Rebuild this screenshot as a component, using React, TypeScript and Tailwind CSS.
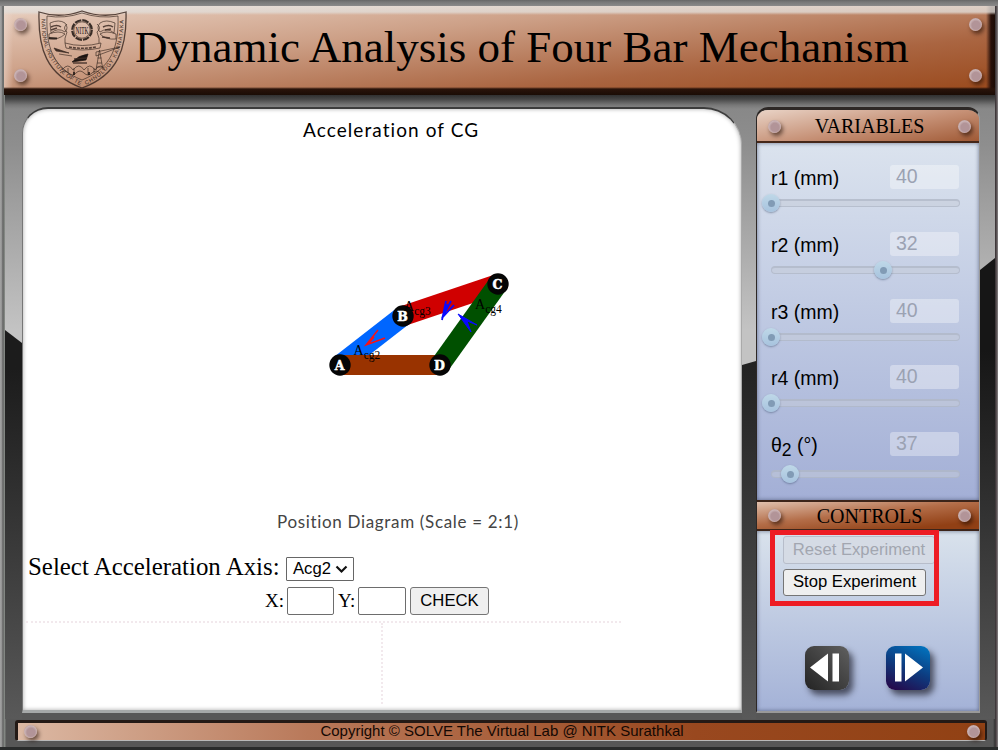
import React from "react";

const SERIF = "font-['Liberation_Serif',serif]";
const SANS = "font-['Liberation_Sans',sans-serif]";

function Rivet() {
  return (
    <span className="block h-[13px] w-[13px] shrink-0 rounded-full bg-[radial-gradient(circle_at_54%_56%,#b29498_0%,#b29498_40%,#cbb4b6_62%,#ab8d8c_85%)] shadow-[2px_3px_4px_rgba(30,10,0,0.6)]" />
  );
}

function Crest() {
  return (
    <svg width="90" height="80" viewBox="0 0 90 80" fill="none" stroke="#3d2c24" strokeWidth="0.8" strokeOpacity="0.85">
      <defs>
        <path id="crest-left" d="M3.500 8 C3 38 12 60 43 76" />
        <path id="crest-right" d="M46 76 C78 60 86 38 85.500 8" />
      </defs>
      <path d="M1 2 Q22 9 44 1 Q66 9 88 2 C89 38 80 65 44 78 C8 65 0 38 1 2Z" strokeWidth="1.3" />
      <path d="M9 6 Q26 9 44 3 Q62 9 80 6 C81 36 74 58 44 70 C14 58 8 36 9 6Z" />
      <g fill="#3d2c24" stroke="none" fontSize="5.600" fontFamily="Liberation Sans">
        <text><textPath href="#crest-left" startOffset="1" textLength="82">NATIONAL INSTITUTE OF TE</textPath></text>
        <text><textPath href="#crest-right" startOffset="2" textLength="80">CHNOLOGY KARNATAKA</textPath></text>
      </g>
      <circle cx="44" cy="20" r="9.800" stroke="#1c1411" strokeWidth="2.200" strokeDasharray="6.600 1.100" />
      <circle cx="44" cy="20" r="8.200" />
      <text x="44" y="24" textAnchor="middle" fontSize="10" textLength="13" lengthAdjust="spacingAndGlyphs" fill="#1c1411" stroke="none" fontFamily="Liberation Serif">NITK</text>
      <path d="M12 13 q9-4 15 0 q4 5 0 9 q-7-5-14 1z M11 24 q10-4 16 0 q-6 6-16 5z M77 13 q-9-4-15 0 q-4 5 0 9 q7-5 14 1z M78 24 q-10-4-16 0 q6 6 16 5z" />
      <path d="M13 17q6-3 10 0m-10 3l6-2M65 17q6-3 10 0m-8 3l6-1M64 27l8 1" strokeWidth="1.500" />
      <path d="M11 28l8 .5" stroke="#1c1411" strokeWidth="2.200" />
      <path d="M29 14 q-5 4 0 8 q-3 7-2 11 M59 14 q5 4 0 8 q3 7 2 11 M27 33 Q44 38 63 33 L62 38 Q44 42 28 38Z" />
      <path d="M31 37 Q44 39.500 58 37" strokeDasharray="3 1" strokeWidth="1.600" />
      <path d="M16 38 l15 5-13-2z M21 44l13 2" fill="#3d2c24" strokeWidth=".8" />
      <path d="M34 52 q7-7 16-8l-2 6z" fill="#1c1411" stroke="#1c1411" />
      <path d="M36 49l13-1M35 53h14" strokeWidth="1.600" />
      <path d="M58 46L82 37L58 42Z" />
      <path d="M61.500 40 L58 60 M61.500 40 L65 60 M59.500 48h4M59 53h5M58.500 57h6" />
      <path d="M24 60 q6-8 11 0 q6-8 11 0 q6-8 11 0 q6-8 10 0 M22 63 q4-4 8 0t8 0t8 0t8 0t8 0 M30 58v5M36 58v7M50 58v7M56 58v5" />
      <path d="M36 62v3M51 62v3" stroke="#1c1411" strokeWidth="1.800" />
    </svg>
  );
}

const variables = [
  { label: <>r1 (mm)</>, value: "40", at: 0, gap: "mt-[10px]", row: "h-[67px]" },
  { label: <>r2 (mm)</>, value: "32", at: 112, gap: "mt-[10px]", row: "h-[67px]" },
  { label: <>r3 (mm)</>, value: "40", at: 0, gap: "mt-[10px]", row: "h-[66px]" },
  { label: <>r4 (mm)</>, value: "40", at: 0, gap: "mt-[10px]", row: "h-[67px]" },
  { label: <>θ<sub className="text-[17.500px]">2</sub> (°)</>, value: "37", at: 19, gap: "mt-[14px]", row: "h-[68px]" },
];

function SectionTitle({ children, className }: { children: React.ReactNode; className: string }) {
  return (
    <div className={`flex items-center justify-between pl-[11px] pr-[8px] ${SERIF} text-[20px] leading-none text-black ${className}`}>
      <Rivet />
      <span>{children}</span>
      <Rivet />
    </div>
  );
}

function Diagram() {
  const nodes = [
    { n: "A", x: 340, y: 365 },
    { n: "B", x: 403, y: 316 },
    { n: "C", x: 498, y: 284 },
    { n: "D", x: 440, y: 365 },
  ];
  return (
    <svg className="block" width="718" height="356" viewBox="23 146 718 356">
      <path d="M340 365L403 316" stroke="#0066ff" strokeWidth="20" />
      <path d="M403 316L498 284" stroke="#d00000" strokeWidth="20" />
      <path d="M340 365H440" stroke="#993300" strokeWidth="20" />
      <path d="M440 365L498 284" stroke="#005000" strokeWidth="20" />
      {nodes.map((p) => (
        <g key={p.n}>
          <circle cx={p.x} cy={p.y} r="10.700" fill="#050505" />
          <text x={p.x - 0.5} y={p.y + 4.5} textAnchor="middle" fontFamily="DejaVu Serif" fontWeight="bold" fontSize="12.500" fill="#fff" stroke="#fff" strokeWidth="0.500">{p.n}</text>
        </g>
      ))}
      <path d="M378 330L366 345L385 338M369 343L374 337" fill="none" stroke="#ff1010" strokeWidth="1.400" />
      <path d="M446 301L442 320M451 301L442 318L454 305M447 304L444 316" fill="none" stroke="#0808ff" strokeWidth="1.800" />
      <path d="M458 314L477 325L467 321L471 332Z" fill="#0808ff" stroke="#0808ff" strokeWidth="1" />
      <g fontFamily="Liberation Serif" fontSize="14" fill="#000">
        <text x="353.500" y="355">A<tspan dy="4" fontSize="11.500">cg2</tspan></text>
        <text x="404" y="311">A<tspan dy="4" fontSize="11.500">cg3</tspan></text>
        <text x="475" y="309">A<tspan dy="4" fontSize="11.500">cg4</tspan></text>
      </g>
    </svg>
  );
}

function StepIcon({ dir }: { dir: "back" | "next" }) {
  return dir === "back" ? (
    <button className="h-[44px] w-[44px] rounded-[9px] bg-gradient-to-tr from-[#242424] to-[#606060] shadow-[4px_5px_6px_rgba(20,20,30,0.65)]">
      <svg width="44" height="44" viewBox="0 0 44 44" fill="#fff"><path d="M5 21.500L23 7.500V35.500ZM27.500 7.500H34V35.500H27.500Z" /></svg>
    </button>
  ) : (
    <button className="h-[44px] w-[44px] rounded-[9px] bg-[linear-gradient(25deg,#26084a_5%,#0d3c80_50%,#0078c4_100%)] shadow-[4px_5px_6px_rgba(20,20,30,0.65)]">
      <svg width="44" height="44" viewBox="0 0 44 44" fill="#fff"><path d="M9 7.500H15.500V35.500H9ZM19 7.500L37 21.500L19 35.500Z" /></svg>
    </button>
  );
}

export default function App() {
  return (
    <div className="flex h-[750px] w-[998px] flex-col overflow-hidden bg-[#575757] bg-[linear-gradient(90deg,#a5a5a5_0px,#909090_2px,#555_3px,#858985_4px,#808480_5px,transparent_6px,transparent_993px,#333_995px,#4b3f43_996px,#858585_998px)]">
      <div className="h-[6px] shrink-0 bg-[linear-gradient(#666,#777_2px,#8a8989_6px)]" />

      <header className="ml-[4px] mr-[3px] flex h-[89px] shrink-0 bg-[linear-gradient(180deg,rgba(231,227,223,0.8)_0px,rgba(225,220,215,0.8)_6px,transparent_9px,transparent_81px,#29130a_83px,#1a0c05_89px),linear-gradient(90deg,rgba(240,220,210,0.55)_0px,transparent_9px,transparent_982px,#28100a_987px,#1c0c05_991px),linear-gradient(174deg,#e9d1c2_0%,#cda087_35%,#aa6541_70%,#984719_100%)]">
        <div className="flex w-[32px] flex-col items-center gap-[38px] pt-[12px]"><Rivet /><Rivet /></div>
        <div className="ml-[2px] w-[90px] pt-[4px]"><Crest /></div>
        <h1 className={`ml-[7px] mt-[15px] flex-1 whitespace-nowrap ${SERIF} text-[45px] leading-[52px] text-black`}>
          Dynamic Analysis of Four Bar Mechanism
        </h1>
        <div className="mr-[13px] flex flex-col items-center gap-[38px] pt-[12px]"><Rivet /><Rivet /></div>
      </header>

      <div className="ml-[5px] mr-[3px] grid h-[624px] shrink-0 grid-cols-[17px_720px_14px_224px_15px] bg-[linear-gradient(180deg,#303030_0px,#454545_4px,#777_10px,#888_14px,#8e8e8e_50px,#c3c3c3_235px,#c3c3c3_280px,#575757_281px,#575757_100%)]">
        <div>
          <div className="mt-[235px] h-[389px] bg-gradient-to-b from-[#1c1c1c] from-10% to-[#595959] [clip-path:polygon(0_0,100%_13px,100%_100%,0_100%)]" />
        </div>

        <main className="mb-[6px] mt-[12px] flex flex-col overflow-hidden rounded-tl-[26px] rounded-tr-[38px] border-t-2 border-t-[#3c3c3c] border-l border-l-[#777] border-r border-r-[#aaa] border-b-[3px] border-b-[#a5a8a8] bg-white shadow-[inset_0_0_4px_rgba(0,0,0,0.35)]">
          <h2 className="ml-[280px] mt-[8px] h-[29px] whitespace-nowrap font-['Lato',sans-serif] text-[19px] leading-[26px] tracking-[1.080px] text-black">Acceleration of CG</h2>
          <Diagram />
          <p className="ml-[254px] mt-[8px] h-[26px] whitespace-nowrap font-['Lato',sans-serif] text-[17px] leading-[24px] tracking-[0.670px] text-[#444]">Position Diagram (Scale = 2:1)</p>
          <div className="ml-[5px] mt-[19px] flex h-[28px] items-center">
            <label className={`mb-[5px] w-[258px] whitespace-nowrap ${SERIF} text-[24.900px] leading-[28px]`}>Select Acceleration Axis:</label>
            <div className={`flex h-[24px] w-[68px] items-center gap-[4px] rounded-[1px] border border-[#666] pl-[6px] ${SANS} text-[16.670px] leading-none`}>
              <span className="pt-[1px]">Acg2</span>
              <svg width="13" height="9" viewBox="0 0 13 9" fill="none" stroke="#111" strokeWidth="2.200"><path d="M1.500 1.500L6.500 6.500L11.500 1.500" /></svg>
            </div>
          </div>
          <div className={`ml-[242px] mt-[4px] flex h-[28px] items-center ${SERIF} text-[19px]`}>
            <span className="w-[22px]">X:</span>
            <span className="h-[28px] w-[47px] rounded-[2px] border border-[#6d6d6d]" />
            <span className="w-[24px] pl-[4px]">Y:</span>
            <span className="h-[28px] w-[48px] rounded-[2px] border border-[#6d6d6d]" />
            <button className={`ml-[4px] h-[28px] w-[79px] rounded-[3px] border border-[#757575] bg-[#efefef] ${SANS} text-[16.670px] leading-none`}>CHECK</button>
          </div>
          <div className="ml-[3px] mt-[6px] grid h-[83px] w-[595px] shrink-0 grid-cols-[357px_1fr] border-t-2 border-dotted border-[#f2e9ed]">
            <div className="border-r-2 border-dotted border-[#f2e9ed]" />
            <div />
          </div>
        </main>

        <div>
          <div className="mt-[266px] h-[358px] bg-gradient-to-b from-[#222] to-[#595959] [clip-path:polygon(0_4px,100%_0,100%_100%,0_100%)]" />
        </div>

        <aside className={`mb-[6px] mt-[12px] flex flex-col overflow-hidden rounded-t-[12px] border-x border-b-2 border-t-[3px] border-[#2d2826] border-b-[#999] border-r-[#999] ${SANS}`}>
          <SectionTitle className="h-[33px] shrink-0 border-b-2 border-[#452719] bg-[linear-gradient(170deg,#e9d3c6,#c58f74_55%,#a05a36)] pt-[1px]">VARIABLES</SectionTitle>
          <section className="h-[357px] shrink-0 bg-gradient-to-b from-[#dbe3ee] to-[#a3afd6] pl-[14px] pt-[22px] shadow-[inset_0_0_4px_rgba(60,70,100,0.7)]">
            {variables.map((v, i) => (
              <div key={i} className={v.row}>
                <div className="flex h-[24px] w-[188px] items-start justify-between">
                  <label className="whitespace-nowrap text-[19.500px] leading-[26px] text-black">{v.label}</label>
                  <span className="h-[24px] w-[69px] rounded-[3px] bg-white/35 pl-[6px] text-[19.500px] leading-[22px] text-[#9ba2b3]">{v.value}</span>
                </div>
                <div className={`relative h-[8px] w-[189px] rounded-full border border-t-2 border-[#aab1c1]/60 bg-[#c5cbd8]/50 ${v.gap}`}>
                  <span className="absolute top-[-7px] flex h-[18px] w-[18px] items-center justify-center rounded-full bg-gradient-to-b from-[#bfd8e8] to-[#a7c3de] shadow-[0_1px_2px_rgba(60,80,110,0.5)]" style={{ left: v.at - 10 }}>
                    <i className="h-[7px] w-[7px] rounded-full bg-[#819bb5]" />
                  </span>
                </div>
              </div>
            ))}
          </section>
          <SectionTitle className="h-[31px] shrink-0 border-y-2 border-[#3c2419] bg-[linear-gradient(174deg,#e0c0ad,#b36d48_45%,#914015_85%)]">CONTROLS</SectionTitle>
          <section className="flex-1 bg-gradient-to-b from-[#d9e2ec] to-[#a4b2d7] shadow-[inset_0_0_4px_rgba(60,70,100,0.7)]">
            <div className="relative flex flex-col items-start gap-[5px] pl-[26px] pt-[5px]">
              <button disabled className="h-[28px] w-[152px] whitespace-nowrap rounded-[3px] border border-[#b7bdca] bg-[#d5dbe5] text-[16.670px] leading-none text-[#a2a6b0]">Reset Experiment</button>
              <button className="h-[27px] w-[143px] whitespace-nowrap rounded-[3px] border border-[#757575] bg-[#efefef] text-[16.670px] leading-none text-black">Stop Experiment</button>
              <span className="absolute left-[13px] top-[-1px] h-[76px] w-[169px] border-[5px] border-[#ed1c24]" />
            </div>
            <div className="ml-[48px] mt-[50px] flex gap-[37px]"><StepIcon dir="back" /><StepIcon dir="next" /></div>
          </section>
        </aside>

        <div>
          <div className="mt-[163px] h-[461px] bg-gradient-to-b from-[#161616] from-20% to-[#595959] [clip-path:polygon(0_12px,100%_0,100%_100%,0_100%)]" />
        </div>
      </div>

      <footer className={`ml-[15px] mr-[11px] mt-[1px] flex h-[21px] shrink-0 items-center justify-between rounded-[3px] border-b border-l-[3px] border-r-2 border-t-[3px] border-[#241a16] border-b-[#b9b9b9] bg-[linear-gradient(90deg,#dcb9a4,#b9795a_30%,#99481f_70%,#914114)] pl-[6px] pr-[5px] ${SANS} text-[15px] leading-none text-[#140803]`}>
        <Rivet />
        <span className="mb-[3px] whitespace-nowrap">Copyright © SOLVE The Virtual Lab @ NITK Surathkal</span>
        <Rivet />
      </footer>
      <div className="mt-[6px] h-[3px] shrink-0 bg-[#292b2b]" />
    </div>
  );
}
